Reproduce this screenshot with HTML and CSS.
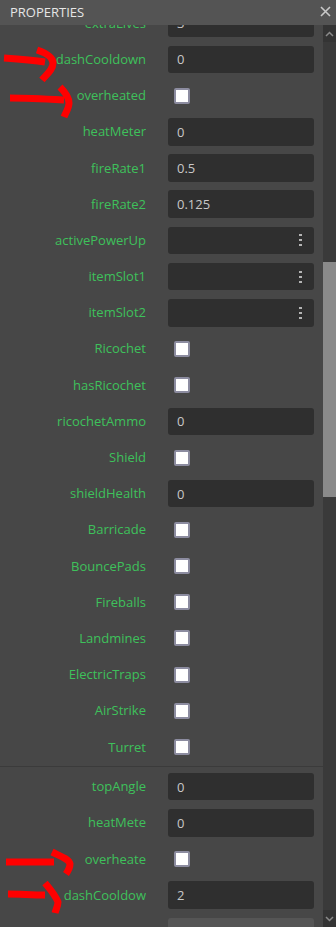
FILE: index.html
```html
<!DOCTYPE html>
<html>
<head>
<meta charset="utf-8">
<link rel="stylesheet" href="styles.css">
</head>
<body>
<div class="panel">
  <header class="titlebar">
    <span class="title">PROPERTIES</span>
    <svg class="close" width="11" height="11" viewBox="0 0 11 11"><path d="M1 1 L10 10 M10 1 L1 10" stroke="#c8c8c8" stroke-width="1.6" fill="none"/></svg>
  </header>
  <div class="body">
    <div class="content">
      <div class="list">
        <div class="row"><span class="label">extraLives</span><div class="field">3</div></div>
        <div class="row"><span class="label">dashCooldown</span><div class="field">0</div></div>
        <div class="row"><span class="label">overheated</span><div class="check"></div></div>
        <div class="row"><span class="label">heatMeter</span><div class="field">0</div></div>
        <div class="row"><span class="label">fireRate1</span><div class="field">0.5</div></div>
        <div class="row"><span class="label">fireRate2</span><div class="field">0.125</div></div>
        <div class="row"><span class="label">activePowerUp</span><div class="field select"><span class="dots"><i></i><i></i><i></i></span></div></div>
        <div class="row"><span class="label">itemSlot1</span><div class="field select"><span class="dots"><i></i><i></i><i></i></span></div></div>
        <div class="row"><span class="label">itemSlot2</span><div class="field select"><span class="dots"><i></i><i></i><i></i></span></div></div>
        <div class="row"><span class="label">Ricochet</span><div class="check"></div></div>
        <div class="row"><span class="label">hasRicochet</span><div class="check"></div></div>
        <div class="row"><span class="label">ricochetAmmo</span><div class="field">0</div></div>
        <div class="row"><span class="label">Shield</span><div class="check"></div></div>
        <div class="row"><span class="label">shieldHealth</span><div class="field">0</div></div>
        <div class="row"><span class="label">Barricade</span><div class="check"></div></div>
        <div class="row"><span class="label">BouncePads</span><div class="check"></div></div>
        <div class="row"><span class="label">Fireballs</span><div class="check"></div></div>
        <div class="row"><span class="label">Landmines</span><div class="check"></div></div>
        <div class="row"><span class="label">ElectricTraps</span><div class="check"></div></div>
        <div class="row"><span class="label">AirStrike</span><div class="check"></div></div>
        <div class="row"><span class="label">Turret</span><div class="check"></div></div>
      </div>
      <div class="section">
        <div class="row"><span class="label">topAngle</span><div class="field">0</div></div>
        <div class="row"><span class="label">heatMete</span><div class="field">0</div></div>
        <div class="row"><span class="label">overheate</span><div class="check"></div></div>
        <div class="row"><span class="label">dashCooldow</span><div class="field">2</div></div>
        <div class="row"><span class="label"></span><div class="field light"></div></div>
      </div>
    </div>
    <div class="scrollbar">
      <div class="sb-btn">
        <svg width="9" height="6" viewBox="0 0 9 6"><path d="M1 5 L4.5 1.5 L8 5" stroke="#8a8a8a" stroke-width="1.5" fill="none"/></svg>
      </div>
      <div class="sb-track"><div class="thumb"></div></div>
      <div class="sb-btn">
        <svg width="9" height="6" viewBox="0 0 9 6"><path d="M1 1 L4.5 4.5 L8 1" stroke="#8a8a8a" stroke-width="1.5" fill="none"/></svg>
      </div>
    </div>
  </div>
  <svg class="annot" width="336" height="927" viewBox="0 0 336 927">
    <g stroke="#ff0000" stroke-width="7" fill="none" stroke-linecap="butt" stroke-linejoin="round">
      <path d="M4 58 C18 59 32 60 45 62"/>
      <path d="M37 50 C46 53 53 57 53 63 C53 70 46 75 42 80"/>
      <path d="M10 98 C28 98 46 99 64 100"/>
      <path d="M60 87 C66 93 69 98 69 103 C69 108 66 112 64 117"/>
      <path d="M6 862 C20 862 38 862 54 862"/>
      <path d="M52 852 C60 856 69 859 70 864 C70 868 68 871 66 874"/>
      <path d="M8 894 C20 894 32 895 45 895"/>
      <path d="M45 883 C51 890 56 897 58 902 C58 906 56 909 55 913"/>
    </g>
  </svg>
</div>
</body>
</html>
```

FILE: styles.css
```css
html, body {
  margin: 0;
  padding: 0;
  background: #474747;
  overflow: hidden;
}

.panel {
  position: relative;
  width: 336px;
  height: 927px;
  display: flex;
  flex-direction: column;
  font-family: "Open Sans", "Noto Sans", sans-serif;
  font-size: 13px;
  overflow: hidden;
}

.titlebar {
  height: 25px;
  flex: 0 0 25px;
  background: #545454;
  display: flex;
  align-items: center;
  justify-content: space-between;
  padding: 0 5px 0 10px;
  position: relative;
  z-index: 2;
}

.title {
  color: #e6e6e6;
  font-size: 13px;
  letter-spacing: 0;
  margin-top: -2px;
}

.close {
  margin-top: -3px;
}

.body {
  flex: 1;
  display: flex;
  min-height: 0;
}

.content {
  flex: 1;
  min-width: 0;
  overflow: hidden;
  background: #474747;
}

.list {
  margin-top: -19.8px;
}

.row {
  height: 36.2px;
  display: flex;
  align-items: center;
  padding-right: 9px;
}

.label {
  width: 146px;
  flex: 0 0 146px;
  text-align: right;
  color: #3ec15b;
  white-space: nowrap;
  overflow: hidden;
  margin-top: -1px;
}

.field {
  margin-left: 22px;
  flex: 1;
  height: 27.5px;
  background: #2f2f2f;
  border-radius: 3px;
  color: #c8c8c8;
  display: flex;
  align-items: center;
  padding-left: 9px;
  box-sizing: border-box;
}

.field.light {
  background: #555555;
}

.field.select {
  justify-content: flex-end;
  padding-right: 12px;
}

.dots {
  display: flex;
  flex-direction: column;
  gap: 3px;
}

.dots i {
  display: block;
  width: 3px;
  height: 2px;
  background: #b4b4b4;
}

.check {
  margin-left: 28px;
  width: 12px;
  height: 12px;
  border: 2px solid #8c8ca0;
  border-radius: 2px;
  background: #ffffff;
}

.section {
  border-top: 1px solid #3b3b3b;
  padding-top: 2px;
  margin-top: 0.4px;
}

.scrollbar {
  width: 13px;
  flex: 0 0 13px;
  background: #3a3a3a;
  display: flex;
  flex-direction: column;
}

.sb-btn {
  height: 17px;
  flex: 0 0 17px;
  background: #343434;
  display: flex;
  align-items: center;
  justify-content: center;
}

.sb-track {
  flex: 1;
}

.thumb {
  margin-top: 220px;
  height: 235px;
  background: #8a8a8a;
}

.annot {
  position: absolute;
  left: 0;
  top: 0;
  pointer-events: none;
  z-index: 3;
}
```
